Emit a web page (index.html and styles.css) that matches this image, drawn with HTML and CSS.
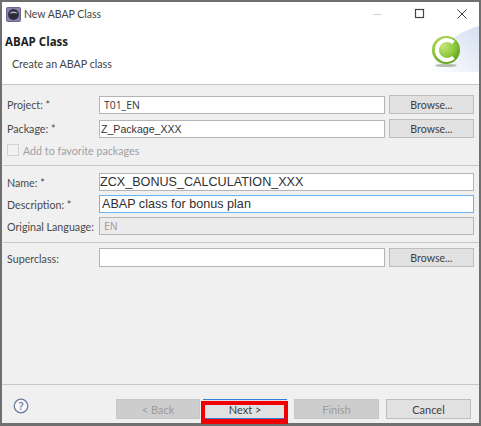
FILE: index.html
```html
<!DOCTYPE html>
<html lang="en">
<head>
  <meta charset="UTF-8" />
  <title>New ABAP Class</title>
  <link rel="stylesheet" href="styles.css">
</head>
<body>
  <div class="window">

    <div class="titlebar">
      <svg class="app-icon" width="15" height="15" viewBox="0 0 15 15">
        <rect x="0.5" y="0.5" width="14" height="14" rx="1" fill="#8d7fa8" stroke="#6f6390"/>
        <circle cx="7.5" cy="7.5" r="5.4" fill="#2e2c3c"/>
        <path d="M3.4 6.6a4.3 3 0 0 1 8.2 0a6 2 0 0 0-8.2 0z" fill="#b9b7c6"/>
      </svg>
      <span class="title">New ABAP Class</span>
      <div class="win-controls">
        <svg width="12" height="12" viewBox="0 0 12 12"><path d="M1 6.5h9" stroke="#d4d4d4" fill="none"/></svg>
        <svg width="12" height="12" viewBox="0 0 12 12"><rect x="1.5" y="1.5" width="8" height="8" fill="none" stroke="#444" stroke-width="1.2"/></svg>
        <svg width="12" height="12" viewBox="0 0 12 12"><path d="M1.5 1.5l9 9M10.5 1.5l-9 9" stroke="#444" fill="none"/></svg>
      </div>
    </div>

    <div class="banner">
      <div class="banner-text">
        <h1>ABAP Class</h1>
        <p>Create an ABAP class</p>
      </div>
      <svg class="class-logo" width="49" height="48" viewBox="0 0 49 48">
        <defs>
          <radialGradient id="ball" cx="40%" cy="35%" r="70%">
            <stop offset="0" stop-color="#c4e67a"/>
            <stop offset="0.6" stop-color="#8ec63a"/>
            <stop offset="1" stop-color="#5a9a1c"/>
          </radialGradient>
          <linearGradient id="glow" x1="0" y1="1" x2="1" y2="0">
            <stop offset="0" stop-color="#ffffff"/>
            <stop offset="1" stop-color="#d6e0f2"/>
          </linearGradient>
        </defs>
        <path d="M0 48C6 24 26 8 49 2V48z" fill="url(#glow)"/>
        <ellipse cx="16" cy="41.5" rx="11" ry="1.6" fill="#b9bdb0"/>
        <circle cx="16" cy="26" r="14" fill="url(#ball)"/>
        <path d="M23.5 18.5a10 10 0 1 0 0 15" fill="none" stroke="#fff" stroke-width="4"/>
      </svg>
    </div>

    <div class="body">
      <div class="form-row">
        <label>Project: *</label>
        <input class="field field-sm" type="text" value="T01_EN">
        <button class="btn">Browse...</button>
      </div>
      <div class="form-row">
        <label>Package: *</label>
        <input class="field field-arial" type="text" value="Z_Package_XXX">
        <button class="btn">Browse...</button>
      </div>
      <div class="check-row">
        <span class="check"></span>
        <span>Add to favorite packages</span>
      </div>

      <hr class="sep sep-a">

      <div class="form-row form-row-wide">
        <label>Name: *</label>
        <input class="field field-lg" type="text" value="ZCX_BONUS_CALCULATION_XXX">
      </div>
      <div class="form-row form-row-wide">
        <label>Description: *</label>
        <input class="field field-lg field-focus" type="text" value="ABAP class for bonus plan">
      </div>
      <div class="form-row form-row-wide">
        <label>Original Language:</label>
        <input class="field field-sm field-off" type="text" value="EN" disabled>
      </div>

      <hr class="sep sep-b">

      <div class="form-row form-row-last">
        <label>Superclass:</label>
        <input class="field" type="text">
        <button class="btn">Browse...</button>
      </div>
    </div>

    <div class="footer">
      <svg class="help" width="16" height="16" viewBox="0 0 16 16">
        <circle cx="8" cy="8" r="6.8" fill="#f6f8fb" stroke="#6d7f9c" stroke-width="1.3"/>
        <text x="8" y="12" text-anchor="middle" class="help-mark">?</text>
      </svg>
      <div class="wizard-btns">
        <button class="btn btn-wizard btn-off">&lt; Back</button>
        <button class="btn btn-wizard btn-next">Next &gt;<span class="callout"></span></button>
        <button class="btn btn-wizard btn-off btn-finish">Finish</button>
        <button class="btn btn-wizard btn-cancel">Cancel</button>
      </div>
    </div>

  </div>
</body>
</html>
```

FILE: styles.css
```css
* { margin:0; padding:0; box-sizing:border-box; }
html, body {
  width:481px; height:426px;
  overflow:hidden;
  font-family: Lato, "Open Sans", sans-serif;
  font-size: 10.7px;
  color: #3c3c3c;
}

.window {
  width:481px; height:426px;
  border: 2px solid #6f6f6f;
  border-bottom-width: 3px;
  background: #f0f0f0;
  display: flex; flex-direction: column;
}

/* === Title bar === */
.titlebar {
  height: 24px;
  background: #fff;
  display: flex; align-items: center;
  padding-left: 4px;
  flex: none;
}
.app-icon { margin-right: 3px; }
.title { font-size: 10.5px; color: #444; }
.win-controls {
  margin-left: auto;
  display: flex; align-items: center; gap: 30px;
  padding-right: 11px;
}

/* === Banner === */
.banner {
  height: 59px;
  background: #fff;
  border-bottom: 1px solid #c8c8c8;
  display: flex; justify-content: space-between; align-items: flex-end;
  flex: none;
}
.banner-text { align-self: flex-start; padding: 8px 0 0 3px; }
.banner h1 { font-family: "Open Sans", sans-serif; font-size: 11.5px; font-weight: 700; color: #222; line-height: 16px; }
.banner p { font-size: 10.7px; line-height: 16px; margin: 6px 0 0 7px; color: #444; }
.class-logo { margin-bottom: 12px; }

/* === Form === */
.body { padding: 10px 0 0 0; flex: none; }
.form-row {
  display: grid;
  grid-template-columns: 93px 286px 85px;
  column-gap: 4px;
  align-items: end;
  height: 19px;
  margin-bottom: 5px;
}
.form-row-wide { grid-template-columns: 93px 375px; height: 18px; margin-bottom: 4px; }
.form-row-last { height: 20px; align-items: stretch; }
.form-row label { padding-left: 5px; white-space: nowrap; color: #4a4a4a; align-self: center; }
.field {
  width: 100%; height: 18px;
  background: #fff;
  border: 1px solid #b4b4b4;
  outline: none;
  padding: 0 4px;
  font-family: "Open Sans", sans-serif; font-size: 10.4px; color: #333;
}
.form-row-last .field { height: 19px; }
.field-arial { font-family: "Liberation Sans", sans-serif; font-size: 10.6px; padding: 0 1px; }
.field-lg { font-family: "Liberation Sans", sans-serif; font-size: 12.6px; padding: 0; color: #303030; }
.field-focus { border-color: #6fb1ea; padding: 0 2px; }
.field-off { background: #ececec; color: #9a9a9a; }
.btn {
  height: 19px;
  background: #e1e1e1;
  border: 1px solid #bdbdbd;
  font-family: inherit; font-size: 10.6px; color: #404040;
}
.check-row {
  display: flex; align-items: center; gap: 4px;
  padding-left: 5px;
  height: 14px;
  color: #a0a0a0;
}
.check {
  width: 12px; height: 12px;
  background: #f1f1f1;
  border: 1px solid #d2d2d2;
}
.sep { border: none; height: 1px; background: #c8c8c8; margin-left: 1px; }
.sep-a { margin-top: 8px; margin-bottom: 7px; }
.sep-b { margin-top: 7px; margin-bottom: 5px; }

/* === Footer === */
.footer {
  margin-top: auto;
  border-top: 1px solid #c8c8c8;
  height: 39px;
  display: flex; align-items: flex-start;
  padding: 13px 0 0 11px;
  flex: none;
  position: relative;
}
.help-mark { font-family: "Open Sans", sans-serif; font-size: 11px; fill: #6d7f9c; font-weight: 600; }
.wizard-btns { display: flex; margin-left: 87px; margin-top: 1px; }
.btn-wizard { width: 84px; height: 20px; flex: none; font-size: 11px; }
.btn-off { background: #cdcdcd; border-color: #c6c6c6; color: #9c9c9c; }
.btn-next {
  margin-left: 3px;
  border-color: #2f80d6;
  border-width: 1px 0;
  position: relative;
  padding-top: 1px;
}
.btn-finish { margin-left: 7px; width: 85px; }
.btn-cancel { margin-left: 7px; width: 85px; }

/* red annotation around the Next button */
.callout {
  position: absolute;
  left: -2px; top: 1px;
  width: 87px; height: 23px;
  border: 4px solid #f00000;
  border-bottom-width: 5px;
}
```
